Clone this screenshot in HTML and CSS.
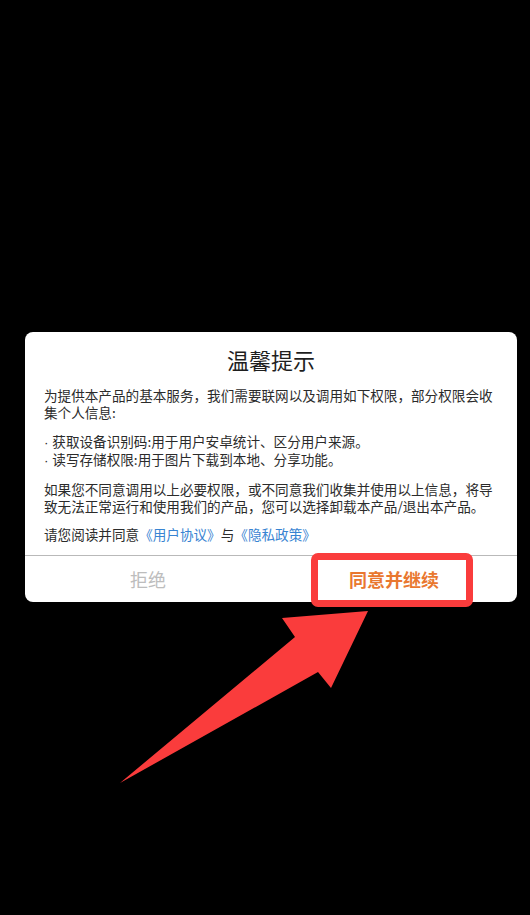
FILE: index.html
```html
<!DOCTYPE html>
<html lang="zh-CN">
<head>
<meta charset="utf-8">
<title>温馨提示</title>
<link rel="stylesheet" href="styles.css">
</head>
<body>
<div class="screen">
  <div class="dialog">
    <h1 class="title">温馨提示</h1>
    <div class="content">
      <p class="para">为提供本产品的基本服务，我们需要联网以及调用如下权限，部分权限会收集个人信息:</p>
      <p class="para"><span class="dot">· </span>获取设备识别码:用于用户安卓统计、区分用户来源。<br><span class="dot">· </span>读写存储权限:用于图片下载到本地、分享功能。</p>
      <p class="para">如果您不同意调用以上必要权限，或不同意我们收集并使用以上信息，将导致无法正常运行和使用我们的产品，您可以选择卸载本产品/退出本产品。</p>
      <p class="para">请您阅读并同意<a class="link">《用户协议》</a>与<a class="link">《隐私政策》</a></p>
    </div>
    <div class="actions">
      <button class="btn btn-reject">拒绝</button>
      <button class="btn btn-agree">同意并继续</button>
    </div>
    <div class="highlight"></div>
  </div>
  <svg class="arrow" width="530" height="915" viewBox="0 0 530 915" aria-hidden="true">
    <polygon points="120,783 318,672 331,688 368,611 282,618 295,637" fill="#fa3c3c"/>
  </svg>
</div>
</body>
</html>
```
FILE: styles.css
```css
html, body {
  margin: 0;
  padding: 0;
  background: #000;
}
.screen {
  position: relative;
  width: 530px;
  height: 915px;
  box-sizing: border-box;
  padding: 332px 13px 0 25px;
  font-family: "Noto Sans CJK SC", "Noto Sans", sans-serif;
  overflow: hidden;
}
.dialog {
  position: relative;
  width: 492px;
  height: 270px;
  background: #fff;
  border-radius: 8px;
  display: flex;
  flex-direction: column;
}
.title {
  margin: 13px 0 0;
  font-size: 22px;
  line-height: 28px;
  font-weight: 400;
  color: #1e1e1e;
  text-align: center;
}
.content {
  padding: 14px 19px 0;
  flex: 1;
}
.para {
  margin: 0 0 11px;
  font-size: 13.6px;
  line-height: 17.4px;
  color: #2b2b2b;
}
.para:last-child {
  margin-bottom: 0;
}
.dot {
  font-family: "Liberation Sans", sans-serif;
}
.link {
  color: #3884d2;
  text-decoration: none;
}
.actions {
  height: 46px;
  border-top: 1px solid #b9b9b9;
  display: flex;
}
.btn {
  flex: 1;
  border: 0;
  background: transparent;
  font-family: "Noto Sans CJK SC", "Noto Sans", sans-serif;
  font-size: 18px;
  line-height: 46px;
  padding: 0;
}
.btn-reject {
  color: #bdbdbd;
}
.btn-agree {
  color: #e9772f;
  font-weight: 700;
}
.highlight {
  position: absolute;
  left: 286px;
  top: 221px;
  width: 162px;
  height: 54px;
  box-sizing: border-box;
  border: 7px solid #fa3c3c;
  border-radius: 7px;
}
.arrow {
  position: absolute;
  left: 0;
  top: 0;
  pointer-events: none;
}
```
